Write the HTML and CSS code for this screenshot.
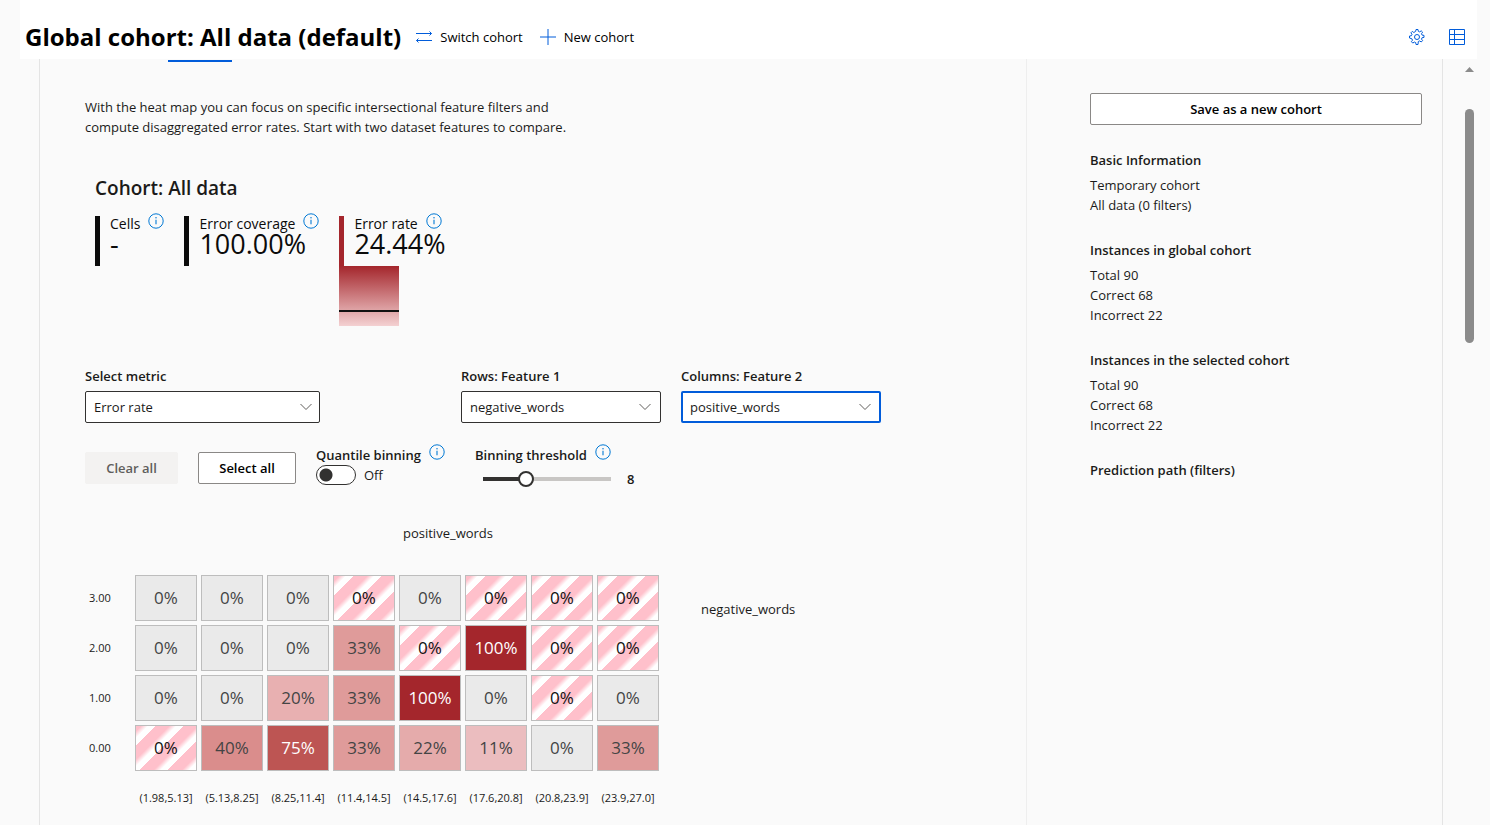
FILE: index.html
```
<!DOCTYPE html>
<html lang="en">
<head>
<meta charset="utf-8">
<title>Error analysis</title>
<link rel="stylesheet" href="styles.css">
</head>
<body>
<svg class="defs" aria-hidden="true">
  <symbol id="info" viewBox="0 0 16 16"><circle cx="8" cy="8" r="7.2" fill="none" stroke="currentColor" stroke-width="1"/><path d="M8 6.8v4.4" stroke="currentColor" stroke-width="1.1" fill="none"/><circle cx="8" cy="4.8" r=".75" fill="currentColor"/></symbol>
  <symbol id="chevron" viewBox="0 0 12 12"><path d="M.5 3 6 8.500 11.500 3" fill="none" stroke="currentColor" stroke-width="1"/></symbol>
</svg>
<div class="page">
  <header class="topbar">
    <h1>Global cohort: All data (default)</h1>
    <button class="command" type="button">
      <svg viewBox="0 0 16 16"><path d="M0 4.500h15.500M13.500 2.500l2 2-2 2M16 11.500H.5M2.500 9.500l-2 2 2 2" fill="none" stroke="currentColor"/></svg>
      Switch cohort
    </button>
    <button class="command" type="button">
      <svg viewBox="0 0 16 16"><path d="M8 0v16M0 8h16" fill="none" stroke="currentColor"/></svg>
      New cohort
    </button>
    <div class="tools">
      <button class="icon-button" type="button" aria-label="Settings">
        <svg viewBox="0 0 16 16" fill="none" stroke="currentColor" stroke-linejoin="round"><path d="M6.700 2.300 7 .5h2l.3 1.800 1.400.6 1.500-1.100 1.400 1.400-1.100 1.500.6 1.400 1.900.3v2l-1.900.3-.6 1.400 1.100 1.500-1.400 1.400-1.500-1.100-1.400.6L9 15.500H7l-.3-1.900-1.400-.6-1.500 1.100-1.400-1.400 1.100-1.500-.6-1.400L.5 9V7l1.900-.3.6-1.400-1.100-1.500 1.400-1.400 1.500 1.100z"/><circle cx="8" cy="8" r="2.500"/></svg>
      </button>
      <button class="icon-button" type="button" aria-label="Cohort list">
        <svg viewBox="0 0 16 16" fill="none" stroke="currentColor"><path d="M.5.5h15v15H.5zM.5 5.500h15M.5 10.500h15M5.500.5v15"/></svg>
      </button>
    </div>
  </header>

  <div class="viewport">
    <main class="card">
      <section class="analysis">
        <div class="tabline"></div>
        <p class="intro">With the heat map you can focus on specific intersectional feature filters and compute disaggregated error rates. Start with two dataset features to compare.</p>

        <div class="summary">
          <h2>Cohort: All data</h2>
          <div class="stats">
            <div class="stat">
              <div class="stat-label">Cells <svg class="info"><use href="#info"/></svg></div>
              <div class="stat-value">-</div>
            </div>
            <div class="stat">
              <div class="stat-label">Error coverage <svg class="info"><use href="#info"/></svg></div>
              <div class="stat-value">100.00%</div>
            </div>
            <div class="rate">
              <div class="stat stat-red">
                <div class="stat-label">Error rate <svg class="info"><use href="#info"/></svg></div>
                <div class="stat-value">24.44%</div>
              </div>
              <div class="scale"><div class="mark"></div></div>
            </div>
          </div>
        </div>

        <div class="fields">
          <div class="field metric">
            <label for="metric">Select metric</label>
            <div class="select"><select id="metric"><option>Error rate</option></select><svg><use href="#chevron"/></svg></div>
          </div>
          <div class="field">
            <label for="rows">Rows: Feature 1</label>
            <div class="select"><select id="rows"><option>negative_words</option></select><svg><use href="#chevron"/></svg></div>
          </div>
          <div class="field">
            <label for="columns">Columns: Feature 2</label>
            <div class="select active"><select id="columns"><option>positive_words</option></select><svg><use href="#chevron"/></svg></div>
          </div>
        </div>

        <div class="controls">
          <button class="button clear" type="button" disabled>Clear all</button>
          <button class="button all" type="button">Select all</button>
          <div class="control quantile">
            <div class="control-label"><label for="quantile">Quantile binning</label><svg class="info"><use href="#info"/></svg></div>
            <div class="toggle"><input id="quantile" type="checkbox" role="switch"><span>Off</span></div>
          </div>
          <div class="control">
            <div class="control-label"><label for="threshold">Binning threshold</label><svg class="info"><use href="#info"/></svg></div>
            <div class="slider"><input id="threshold" type="range" min="2" max="20" value="8"><output for="threshold">8</output></div>
          </div>
        </div>

        <div class="heatmap">
          <div class="x-title">positive_words</div>
          <div class="plot">
            <table>
              <tbody>
                <tr><th>3.00</th><td>0%</td><td>0%</td><td>0%</td><td class="empty">0%</td><td>0%</td><td class="empty">0%</td><td class="empty">0%</td><td class="empty">0%</td></tr>
                <tr><th>2.00</th><td>0%</td><td>0%</td><td>0%</td><td class="r33">33%</td><td class="empty">0%</td><td class="r100">100%</td><td class="empty">0%</td><td class="empty">0%</td></tr>
                <tr><th>1.00</th><td>0%</td><td>0%</td><td class="r20">20%</td><td class="r33">33%</td><td class="r100">100%</td><td>0%</td><td class="empty">0%</td><td>0%</td></tr>
                <tr><th>0.00</th><td class="empty">0%</td><td class="r40">40%</td><td class="r75">75%</td><td class="r33">33%</td><td class="r22">22%</td><td class="r11">11%</td><td>0%</td><td class="r33">33%</td></tr>
              </tbody>
              <tfoot>
                <tr><th></th><th>(1.98,5.13]</th><th>(5.13,8.25]</th><th>(8.25,11.4]</th><th>(11.4,14.5]</th><th>(14.5,17.6]</th><th>(17.6,20.8]</th><th>(20.8,23.9]</th><th>(23.9,27.0]</th></tr>
              </tfoot>
            </table>
            <div class="y-title">negative_words</div>
          </div>
        </div>
      </section>

      <aside class="info-panel">
        <button class="button save" type="button">Save as a new cohort</button>
        <section><h3>Basic Information</h3><p>Temporary cohort</p><p>All data (0 filters)</p></section>
        <section><h3>Instances in global cohort</h3><p>Total 90</p><p>Correct 68</p><p>Incorrect 22</p></section>
        <section><h3>Instances in the selected cohort</h3><p>Total 90</p><p>Correct 68</p><p>Incorrect 22</p></section>
        <section><h3>Prediction path (filters)</h3></section>
      </aside>
    </main>
    <div class="scrollbar" aria-hidden="true"><div class="arrow"></div><div class="thumb"></div></div>
  </div>
</div>
</body>
</html>
```
FILE: styles.css
```
* { box-sizing: border-box; }
body {
  margin: 0;
  background: #fafafa;
  color: #1b1a19;
  font: 13px/20px "Open Sans", "Noto Sans", sans-serif;
}
h1, h2, h3, p { margin: 0; }
button, select, input { font: inherit; color: inherit; }
.defs { position: absolute; width: 0; height: 0; }

.page {
  height: 100vh;
  margin: 0 13px 0 20px;
  display: flex;
  flex-direction: column;
  overflow: hidden;
}
.topbar {
  flex: none;
  height: 59px;
  padding: 16px 10px 0 5px;
  display: flex;
  align-items: flex-start;
  background: #fff;
  color: #000;
}
h1 { font-size: 24px; line-height: 42px; font-weight: 700; margin-right: 15px; white-space: nowrap; }
.command {
  height: 42px;
  margin-right: 17px;
  padding: 0;
  border: 0;
  background: none;
  display: flex;
  align-items: center;
  gap: 8px;
}
.command svg, .icon-button svg { width: 16px; height: 16px; display: block; color: #015cda; }
.tools { margin-left: auto; display: flex; gap: 20px; }
.icon-button { height: 42px; width: 20px; padding: 0 2px; border: 0; background: none; }

.viewport { flex: 1; min-height: 0; display: flex; }
.card {
  flex: 1;
  margin-left: 19px;
  display: flex;
  border: solid #e4e4e4;
  border-width: 0 1px;
}
.analysis { flex: 1; padding-left: 45px; }
.tabline { height: 2px; width: 64px; margin: 1px 0 35px 83px; background: #015cda; }
.intro { width: 500px; }

.summary { margin: 38px 0 40px 10px; }
h2 { font-size: 19px; line-height: 26px; font-weight: 600; margin-bottom: 15px; }
.stats { display: flex; align-items: flex-start; gap: 20px; height: 110px; }
.stat { height: 50px; padding-left: 10px; border-left: 5px solid #0b0b0b; color: #0b0b0b; }
.stat-red { border-color: #a4262c; }
.stat-label { display: flex; gap: 8px; height: 18px; line-height: 16px; font-size: 14px; font-weight: 500; }
.stat-value { font-size: 27px; line-height: 20px; font-weight: 500; }
.info { width: 16px; height: 16px; color: #0078d4; flex: none; }
.stat-label .info { margin-top: -3px; }
.scale { width: 60px; height: 60px; padding-top: 44px; background: linear-gradient(#a4262c, #f4d1d2); }
.mark { height: 2px; background: #111; }

.fields { display: flex; gap: 20px; }
.field { width: 200px; }
.metric { width: 235px; margin-right: 121px; }
.field label { display: block; font-weight: 600; margin-bottom: 5px; }
.select { position: relative; }
.select select {
  appearance: none;
  display: block;
  width: 100%;
  height: 32px;
  padding: 0 28px 0 8px;
  border: 1px solid #323130;
  border-radius: 2px;
  background: #fff;
}
.select.active select { border: 2px solid #015cda; padding-left: 7px; outline: 0; }
.select svg { position: absolute; right: 10px; top: 10px; width: 12px; height: 12px; color: #605e5c; pointer-events: none; }
.metric svg { right: 8px; }

.controls { display: flex; align-items: flex-start; margin-top: 22px; padding-top: 7px; }
.button { height: 32px; padding: 0; border: 1px solid #8a8886; border-radius: 2px; background: #fff; color: #000; font-weight: 600; }
.clear { width: 93px; margin-right: 20px; border-color: #f3f2f1; background: #f3f2f1; color: #605e5c; }
.all { width: 98px; margin-right: 20px; }
.control { margin-top: -8px; }
.quantile { width: 159px; }
.control-label { display: flex; gap: 8px; height: 20px; line-height: 22px; font-weight: 600; }
.toggle { display: flex; align-items: center; gap: 8px; margin-top: 1px; }
.toggle input {
  appearance: none;
  width: 40px;
  height: 20px;
  margin: 0;
  border: 1px solid #323130;
  border-radius: 10px;
  background: radial-gradient(circle at 9px 9px, #323130 6px, transparent 7px) #fff;
}
.slider { display: flex; align-items: center; gap: 8px; height: 30px; font-weight: 600; }
.slider input { appearance: none; width: 144px; height: 16px; margin: 0; background: none; }
.slider input::-webkit-slider-runnable-track {
  height: 4px;
  background: linear-gradient(90deg, #323130 33%, #c8c6c4 33%) 8px 0 / 128px 4px no-repeat;
}
.slider input::-webkit-slider-thumb {
  appearance: none;
  width: 16px;
  height: 16px;
  margin-top: -6px;
  border: 2px solid #323130;
  border-radius: 50%;
  background: #fff;
}

.heatmap { margin-top: 29px; }
.x-title { width: 726px; text-align: center; }
.plot { display: flex; margin-top: 28px; }
table { border-spacing: 4px; margin-left: -4px; table-layout: fixed; width: 582px; }
th { width: 46px; padding: 0 0 0 4px; font-size: 11px; font-weight: 400; text-align: left; white-space: nowrap; }
td { width: 62px; height: 46px; padding: 0; border: 1px solid #bdbdbd; background: #eaeaea; color: #444; font-size: 17px; text-align: center; }
tfoot th { height: 46px; width: 62px; padding: 0; text-align: center; }
.empty { background: repeating-linear-gradient(-45deg, #fff, #fff 5px, #ffc0cb 10px, #ffc0cb 20px); color: #111; }
.r11 { background: #ebbdbf; }
.r20 { background: #e8b0b1; }
.r22 { background: #e5abab; }
.r33 { background: #df9b9a; }
.r40 { background: #da8d8c; }
.r75 { background: #bd5553; color: #fff; }
.r100 { background: #a4262c; color: #fff; }
.y-title { margin: 28px 0 0 38px; }

.info-panel { width: 416px; padding: 34px 20px 0 63px; border-left: 1px solid #eee; }
.save { width: 100%; margin-bottom: 25px; }
.info-panel section { margin-bottom: 25px; }
h3 { font-size: 13px; line-height: 20px; font-weight: 600; margin-bottom: 5px; }

.scrollbar { width: 34px; padding: 8px 3px 0 22px; display: flex; flex-direction: column; }
.arrow { width: 9px; height: 5px; background: #8b8b8b; clip-path: polygon(50% 0, 100% 100%, 0 100%); }
.thumb { width: 9px; height: 234px; margin-top: 37px; border-radius: 5px; background: #8b8b8b; }
```
